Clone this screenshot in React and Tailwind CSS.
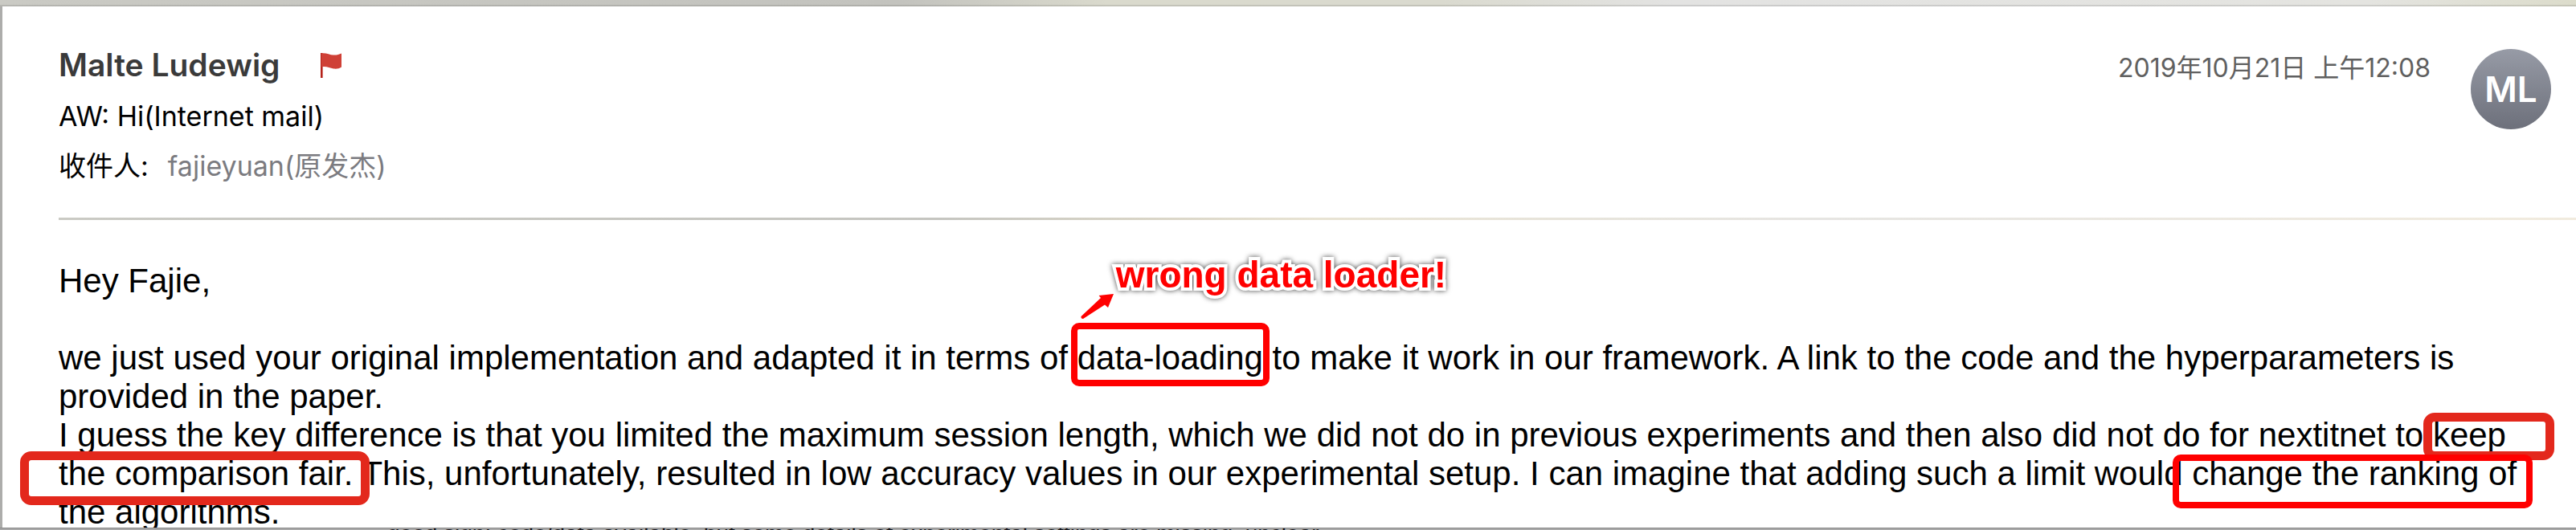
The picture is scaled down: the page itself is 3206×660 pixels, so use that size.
export default function App() {
  return (
    <div className="flex h-screen flex-col bg-[#b0b0ae] font-['Liberation_Sans','Noto_Sans_CJK_SC',sans-serif]">
      <div className="h-2 shrink-0 border-b-2 border-black/10 bg-[linear-gradient(to_right,#cacac4,#c3c3be_35%,#dadacd_43%,#dadacf_56%,#e3e3e2_65%,#e4e4e0_92%,#dcdccb)]" />
      <article className="flex min-h-0 grow flex-col overflow-hidden border-l-3 border-[#adadab] bg-white">
        <header className="flex items-start justify-between pt-[53px] pr-[31px] pl-[70px] font-['Inter','Noto_Sans_CJK_SC',sans-serif]">
          <div>
            <div className="flex h-10 items-center gap-[50px]">
              <h1 className="text-[39px] leading-10 font-semibold text-[#3a3a3a]">Malte Ludewig</h1>
              <svg className="h-8 w-[26px]" viewBox="0 0 26 32" role="img" aria-label="Flagged">
                <path d="M1.300 1v31" stroke="#b5221a" strokeWidth="2.600" />
                <path d="M1 1.500c5-1.400 10 1.800 15 2 4 .2 7-.6 10-2v17c-3 2-6 2.400-10 2-5-.6-9-3.500-15-2z" fill="#cf4036" />
              </svg>
            </div>
            <h2 className="mt-6 text-[34px] leading-10 text-black">AW: Hi(Internet mail)</h2>
            <p className="mt-[22px] flex gap-6 text-[34px] leading-10">
              <span className="text-black">收件人:</span>
              <span className="text-[#7b7b80]">fajieyuan(原发杰)</span>
            </p>
          </div>
          <div className="flex items-start gap-[50px]">
            <time className="pt-1 text-[32px] leading-10 text-[#606060]">2019年10月21日 上午12:08</time>
            <div className="flex size-[100px] items-center justify-center rounded-full bg-linear-to-b from-[#979ba6] to-[#6d707b] text-[44px] font-semibold text-white">ML</div>
          </div>
        </header>
        <div className="mt-11 ml-[70px] h-[3px] shrink-0 bg-[linear-gradient(to_right,#cacac4,#c5c5c0_35%,#d8d4c6_43%,#e8e3d3_50%,#e6e5e2_70%,#f1ebde)]" />
        <section className="pt-[52px] pr-10 pl-[70px] text-[42px] leading-12 text-black">
          <p>Hey Fajie,</p>
          <p className="mt-12">
            we just used your original implementation and adapted it in terms of{" "}
            <span className="relative">
              data-loading
              <span className="absolute -inset-x-2 -top-5 -bottom-3 rounded-[10px] border-8 border-[#ff0000]" />
              <svg className="absolute -top-14 left-1 h-[31px] w-[42px]" viewBox="0 0 42 31" aria-hidden="true">
                <path d="M.5 28 25 5 22.600 2 41 0 34 17 30 13.500 3 31Q0 31 .5 28z" fill="#ff0000" />
              </svg>
              <strong className="absolute -top-[104px] left-12 text-[46px] whitespace-nowrap text-[#ff0000] drop-shadow-[0_0_3px_rgba(0,0,0,0.7)] [-webkit-text-stroke:8px_white] [paint-order:stroke_fill]">
                wrong data loader!
              </strong>
            </span>{" "}
            to make it work in our framework. A link to the code and the hyperparameters is provided in the paper.
          </p>
          <p>
            I guess the key difference is that you limited the maximum session length, which we did not do in previous experiments and then also did not do for nextitnet to{" "}
            <span className="relative">
              keep
              <span className="absolute -top-1 -right-[60px] -bottom-2 -left-3 rounded-[14px] border-[11px] border-[#e3281c]" />
            </span>{" "}
            <span className="relative">
              the comparison fair.
              <span className="absolute -top-1 -right-5 -bottom-4 -left-12 rounded-[14px] border-[11px] border-[#e3281c]" />
            </span>{" "}
            This, unfortunately, resulted in low accuracy values in our experimental setup. I can imagine that adding such a limit would{" "}
            <span className="relative">
              change the ranking of
              <span className="absolute top-0 -right-5 -bottom-5 -left-6 rounded-[10px] border-8 border-[#ff0000]" />
            </span>{" "}
            the algorithms.
          </p>
        </section>
      </article>
      <div className="flex h-[3px] shrink-0 overflow-hidden border-t border-[#8a8a8a] bg-[#a8a8a8] pl-[482px]">
        <p className="-mt-[9px] text-[28px] leading-8 whitespace-nowrap text-[#15151a]">
          good sign: code/data available, but some details of experimental settings are missing, unclear.
        </p>
      </div>
    </div>
  );
}
